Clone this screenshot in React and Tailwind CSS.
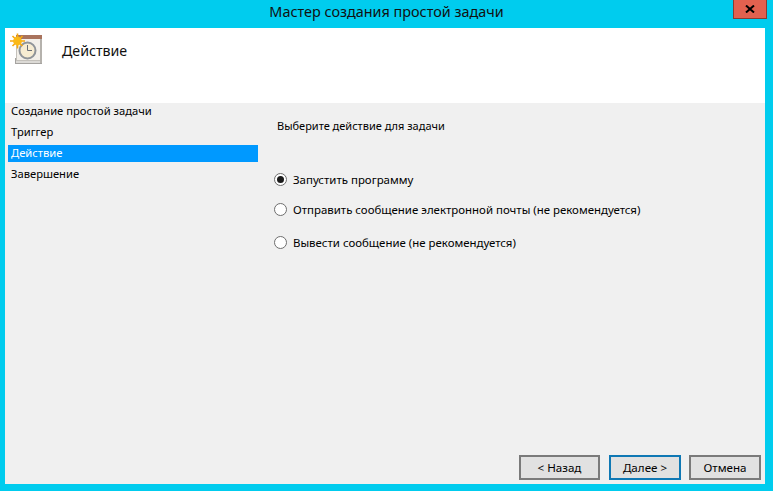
import React from "react";

const font = { fontFamily: '"Noto Sans", sans-serif' };

const TaskIcon = () => (
  <svg width="40" height="40" viewBox="0 0 40 40" className="shrink-0">
    <rect x="10.5" y="30.5" width="26" height="5" fill="#dcdad6" stroke="#a5a3a0" />
    <rect x="11.5" y="8.5" width="25" height="24" fill="#f2efe9" stroke="#c4c1bb" />
    <rect x="11" y="7" width="26" height="4" fill="#a9735d" />
    <rect x="35" y="11" width="2" height="24" fill="#b5b2ad" />
    <circle cx="22.5" cy="22.5" r="8" fill="#f6ecd2" stroke="#8f9499" strokeWidth="2" />
    <path d="M22.5 17v5.5h4.5" fill="none" stroke="#6a6f78" strokeWidth="1" />
    <g stroke="#f7a80f" strokeWidth="1.6">
      <path d="M12.5 5.5v15M5 13h15M7.5 8l10 10M17.5 8l-10 10" />
    </g>
    <circle cx="12.5" cy="13" r="4.4" fill="#fbb917" />
  </svg>
);

const steps = ["Создание простой задачи", "Триггер", "Действие", "Завершение"];

const options = [
  { label: "Запустить программу", checked: true, gap: "mb-[15px]" },
  { label: "Отправить сообщение электронной почты (не рекомендуется)", gap: "mb-[18px]" },
  { label: "Вывести сообщение (не рекомендуется)", gap: "" },
];

const Radio = ({ checked }) => (
  <span className="w-[13px] h-[13px] rounded-full border border-[#6e6e6e] bg-white flex items-center justify-center shrink-0">
    {checked && <span className="w-[7px] h-[7px] rounded-full bg-[#1a1a1a]" />}
  </span>
);

const Button = ({ children, className }) => (
  <button className={`h-[25px] border-2 bg-[#e1e1e1] text-[11.6px] text-black ${className}`}>
    {children}
  </button>
);

export default function App() {
  return (
    <div className="w-[773px] h-[491px] bg-[#00ccee] flex flex-col overflow-hidden text-[11.2px] text-black" style={font}>
      <div className="h-[28px] shrink-0 flex items-start relative">
        <div className="w-full text-center text-[14.4px] leading-[24px] text-[#111]">Мастер создания простой задачи</div>
        <div className="absolute left-[733px] top-0 w-[34px] h-[19px] bg-[#e2614f] border border-[#8a3b32] border-t-0 flex items-center justify-center">
          <svg width="10" height="8" viewBox="0 0 10 8">
            <path d="M1 0.5l8 7M9 0.5l-8 7" stroke="#000" strokeWidth="2" fill="none" />
          </svg>
        </div>
      </div>
      <div className="ml-[5px] mr-[8px] h-[456px] shrink-0 flex flex-col bg-[#f0f0f0]">
        <div className="h-[75px] shrink-0 bg-white flex items-start">
          <TaskIcon />
          <div className="ml-[17px] mt-[13px] text-[14.2px] leading-[20px] text-[#111]">Действие</div>
        </div>
        <div className="flex-1 flex min-h-0">
          <div className="w-[250px] ml-[3px] shrink-0">
            {steps.map((s, i) => (
              <div
                key={s}
                className={`h-[17px] mt-[4px] first:mt-0 pl-[3px] leading-[15px] whitespace-nowrap ${i === 2 ? "bg-[#0099ff] text-white" : ""}`}
              >
                {s}
              </div>
            ))}
          </div>
          <div className="flex-1 flex flex-col pl-[16px] pr-[4px] pb-[4px]">
            <div className="mt-[14px] ml-[3px] leading-[17px] text-[11px]">Выберите действие для задачи</div>
            <div className="mt-[38px] flex flex-col text-[11.45px]">
              {options.map((o) => (
                <div key={o.label} className={`flex items-center h-[15px] gap-[6px] ${o.gap}`}>
                  <Radio checked={o.checked} />
                  <span className="whitespace-nowrap">{o.label}</span>
                </div>
              ))}
            </div>
            <div className="mt-auto flex justify-end">
              <Button className="w-[81px] border-[#7a7a7a]">&lt; Назад</Button>
              <Button className="w-[72px] ml-[9px] border-[#0f78b4]">Далее &gt;</Button>
              <Button className="w-[72px] ml-[8px] border-[#7a7a7a]">Отмена</Button>
            </div>
          </div>
        </div>
      </div>
    </div>
  );
}
